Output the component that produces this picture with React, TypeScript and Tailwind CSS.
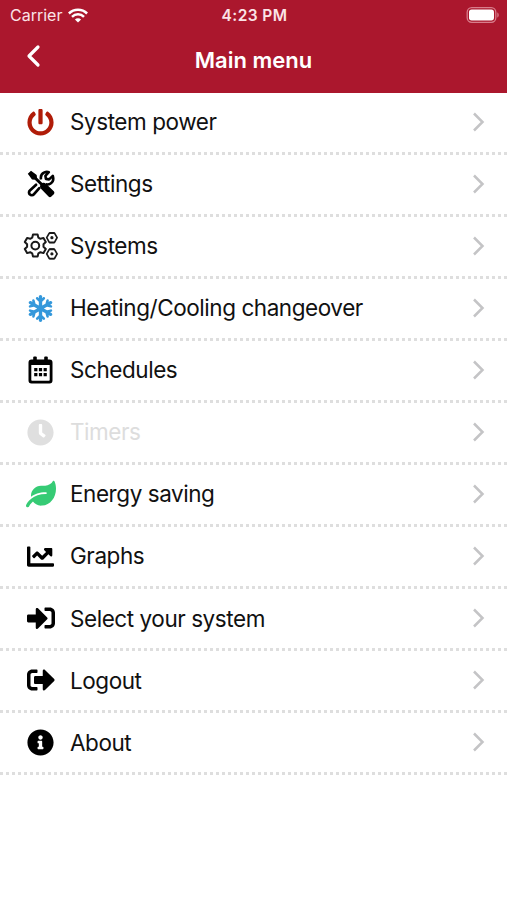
import type { ReactNode } from "react";
import {
  FaChartLine,
  FaClock,
  FaInfoCircle,
  FaLeaf,
  FaPowerOff,
  FaSignInAlt,
  FaSignOutAlt,
} from "react-icons/fa";
import { FaSnowflake } from "react-icons/fa6";

function ToolsIcon() {
  return (
    <svg width="28" height="28" viewBox="0 0 28 28" fill="none" stroke="#000">
      <path d="M12.300 18.200 6.800 24.300a2.600 2.600 0 0 1-3.900.1 2.600 2.600 0 0 1 0-3.900l6.200-5.700" strokeWidth="2.700" strokeLinecap="round" />
      <path d="M14 9.600c-.6-3.300.6-6 3.400-7.200 1.600-.7 3.200-.7 4.400-.2l-3.400 3.600.5 3.100 3.200.5 3.700-3.500c1 3.300.3 6-2.100 7.600-1.500 1-3.200 1.200-4.900.8" strokeWidth="2.600" strokeLinejoin="round" />
      <path d="m.8 3.800 3.200-3 5.700 4.200.3 2.700 5.300 5.400c1.200-.5 2.700-.3 3.700.7l7.800 7.500c.8.800.8 2.100 0 2.900l-2.400 2.400c-.8.800-2.100.8-2.900 0l-7.500-7.800c-1-1-1.200-2.500-.7-3.700L7.900 9.800 5 9.500Z" fill="#000" stroke="none" />
    </svg>
  );
}

function SmallCog({ y }: { y: number }) {
  return (
    <g transform={`translate(28.900 ${y})`}>
      <path d="M-2.600-4.600h5.200L5.200 0 2.600 4.600h-5.200L-5.200 0Z" strokeWidth="1.700" />
      <path d="M-2.600-5.200h5.200M-2.600 5.200h5.200" strokeWidth="1" />
      <circle r="1.600" fill="#1a1a1a" stroke="none" />
    </g>
  );
}

function CogsIcon() {
  return (
    <svg width="36" height="30" viewBox="0 0 36 30" fill="none" stroke="#1a1a1a" strokeWidth="2" strokeLinejoin="round">
      <path d="M10 3.500h4.600l.8 3.200 2 1.100 3.100-.9 2.300 4.100-2.300 2.300v2.400l2.300 2.300-2.300 4.100-3.100-.9-2 1.100-.8 3.300H10l-.8-3.300-2-1.100-3.100.9L1.800 18l2.300-2.300v-2.400L1.800 11l2.300-4.100 3.100.9 2-1.100Z" />
      <circle cx="12.300" cy="14.600" r="3.900" />
      <SmallCog y={6.7} />
      <SmallCog y={22.9} />
    </svg>
  );
}

function CalendarIcon() {
  return (
    <svg width="25" height="28" viewBox="0 0 25 28" fill="#000">
      <rect x="5.200" y=".5" width="3.600" height="6" rx="1" />
      <rect x="16.200" y=".5" width="3.600" height="6" rx="1" />
      <path fillRule="evenodd" d="M3.500 3.500h18a3 3 0 0 1 3 3v18a3 3 0 0 1-3 3h-18a3 3 0 0 1-3-3v-18a3 3 0 0 1 3-3ZM3.300 9v15c0 .4.300.700.7.700h17c.4 0 .7-.3.700-.7V9Z" />
      <path d="M6.200 12h3.200v3.200H6.200zM10.900 12h3.200v3.200h-3.200zM15.600 12h3.200v3.200h-3.200zM6.200 17h3.200v3.200H6.200zM10.900 17h3.200v3.200h-3.200zM15.600 17h3.200v3.200h-3.200z" />
    </svg>
  );
}

type MenuItem = {
  label: string;
  icon: ReactNode;
  disabled?: boolean;
};

const items: MenuItem[] = [
  { label: "System power", icon: <FaPowerOff size={27} color="#b01c08" /> },
  { label: "Settings", icon: <ToolsIcon /> },
  { label: "Systems", icon: <CogsIcon /> },
  { label: "Heating/Cooling changeover", icon: <FaSnowflake size={27} color="#3498db" /> },
  { label: "Schedules", icon: <CalendarIcon /> },
  { label: "Timers", icon: <FaClock size={27} color="#dfdfdf" />, disabled: true },
  { label: "Energy saving", icon: <FaLeaf size={30} color="#36cb75" /> },
  { label: "Graphs", icon: <FaChartLine size={27} /> },
  { label: "Select your system", icon: <FaSignInAlt size={28} /> },
  { label: "Logout", icon: <FaSignOutAlt size={28} /> },
  { label: "About", icon: <FaInfoCircle size={27} /> },
];

function StatusBar() {
  return (
    <div className="grid h-[30px] grid-cols-3 items-center pl-[10px] pr-[8px] text-[#fbe3e7]">
      <div className="flex items-center gap-[6px]">
        <span className="text-[16px]">Carrier</span>
        <svg width="20" height="15" viewBox="0 0 20 15" fill="none" stroke="#fff" strokeWidth="2.500">
          <path d="M.9 5.500a12.900 12.900 0 0 1 18.200 0M4 8.800a8.500 8.500 0 0 1 12 0" />
          <path d="m10 14.600-3.100-3.100a4.400 4.400 0 0 1 6.200 0Z" fill="#fff" stroke="none" />
        </svg>
      </div>
      <span className="pt-px text-center text-[15.500px] font-semibold tracking-[0.4px]">4:23 PM</span>
      <svg className="justify-self-end" width="33" height="16" viewBox="0 0 33 16">
        <rect x="1.200" y=".7" width="28.600" height="14.600" rx="4.500" fill="none" stroke="#d87d8b" strokeWidth="1.300" />
        <rect x="3" y="2.500" width="25" height="11" rx="2.700" fill="#fff" />
        <path d="M31.300 5.500c1.900.6 1.900 4.400 0 5Z" fill="#d87d8b" />
      </svg>
    </div>
  );
}

export default function App() {
  return (
    <div className="min-h-[900px] w-full bg-white font-['Inter',sans-serif] text-black">
      <header className="h-[92.500px] bg-[#ab172d] text-white">
        <StatusBar />
        <div className="grid h-[60px] grid-cols-[60px_1fr_60px] items-center">
          <svg className="mb-[8px] ml-[26px]" width="15" height="24" viewBox="0 0 15 24" fill="none" stroke="#fff" strokeWidth="3.200" strokeLinecap="round" strokeLinejoin="round">
            <path d="M12 3 3 12l9 9" />
          </svg>
          <h1 className="text-center text-[22px] font-semibold">Main menu</h1>
        </div>
      </header>
      <ul>
        {items.map((item) => (
          <li key={item.label} className="flex h-[62.050px] items-center border-b-3 border-dotted border-[#dedede] px-[22px]">
            <span className="flex w-[37px] shrink-0 justify-center">{item.icon}</span>
            <span className={item.disabled ? "ml-[11px] text-[22.500px] tracking-[-0.44px] text-[#dddddd]" : "ml-[11px] text-[22.500px] tracking-[-0.44px] text-[#111]"}>
              {item.label}
            </span>
            <svg className="ml-auto" width="13" height="20" viewBox="0 0 13 20" fill="none" stroke="#c4c4c6" strokeWidth="2.500">
              <path d="m2 1.500 8.500 8.500L2 18.500" />
            </svg>
          </li>
        ))}
      </ul>
    </div>
  );
}
